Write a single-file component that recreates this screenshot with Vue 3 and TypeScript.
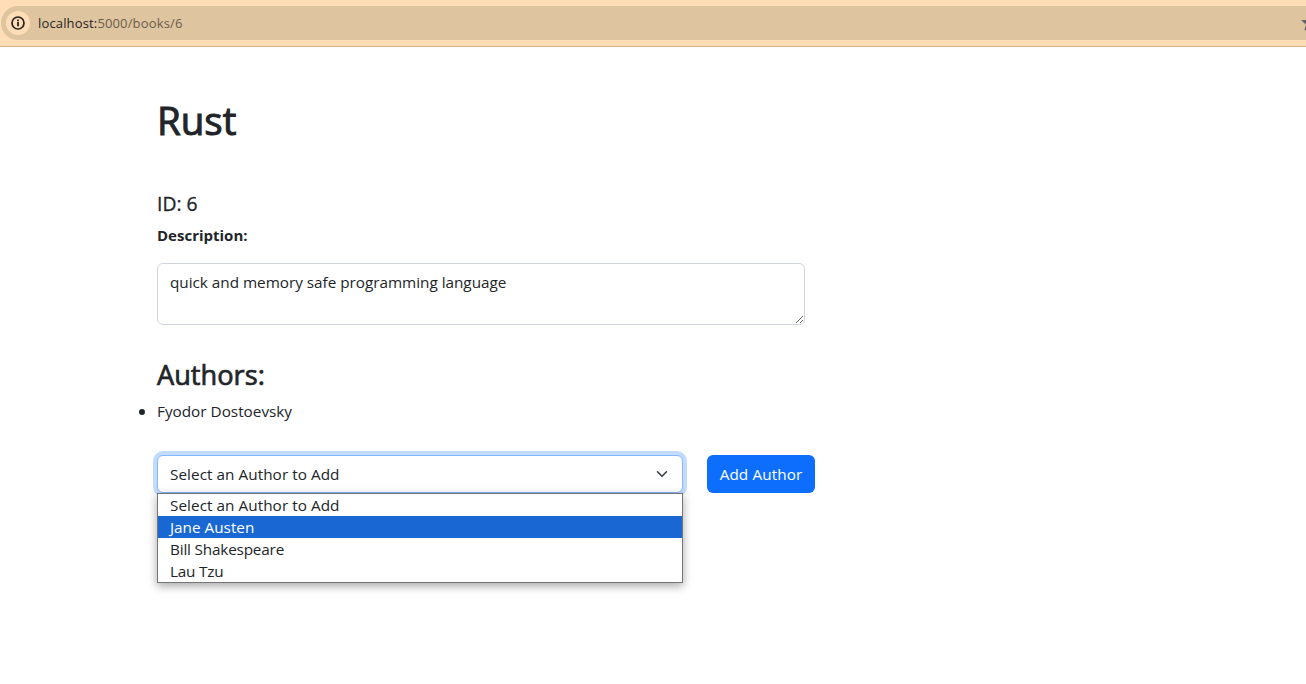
<script setup lang="ts">
import { ref } from 'vue'

const description = ref<string>('quick and memory safe programming language')
const authors: string[] = ['Fyodor Dostoevsky']
const placeholder = 'Select an Author to Add'
const options: { label: string; cls: string }[] = [
  { label: placeholder, cls: 'o-select' },
  { label: 'Jane Austen', cls: 'o-jane' },
  { label: 'Bill Shakespeare', cls: 'o-tight' },
  { label: 'Lau Tzu', cls: 'o-tight' },
]
const active = ref<number>(1)
</script>

<template>
  <div class="window">
    <header class="toolbar">
      <div class="address">
        <span class="info">
          <svg width="14" height="14" viewBox="0 0 14 14">
            <circle cx="7" cy="7" r="6" fill="none" stroke="#27231f" stroke-width="1.7" />
            <rect x="6.1" y="6" width="1.8" height="4.3" fill="#27231f" />
            <rect x="6.1" y="3.5" width="1.8" height="1.7" fill="#27231f" />
          </svg>
        </span>
        <span class="url"><span class="host">localhost:</span>5000/books/6</span>
        <svg class="star" width="18" height="18" viewBox="0 0 18 18">
          <path d="M9 0l2.400 5.800 6.600.500-5 4.200 1.600 6.300L9 13.400l-5.600 3.400 1.600-6.300L0 6.300l6.600-.500z" fill="#5f6064" />
        </svg>
      </div>
    </header>

    <main class="page">
      <h1>Rust</h1>
      <h5>ID: 6</h5>
      <label class="desc-label">Description:</label>
      <textarea v-model="description" class="desc" spellcheck="false"></textarea>
      <h3>Authors:</h3>
      <ul>
        <li v-for="a in authors" :key="a">{{ a }}</li>
      </ul>
      <div class="row">
        <div class="picker">
          <div class="select">
            <span class="o-select">{{ placeholder }}</span>
            <svg width="16" height="12" viewBox="0 0 16 16">
              <path d="m2 5 6 6 6-6" fill="none" stroke="#343a40" stroke-width="2" stroke-linecap="round" stroke-linejoin="round" />
            </svg>
          </div>
          <div class="menu">
            <div
              v-for="(o, i) in options"
              :key="o.label"
              class="option"
              :class="{ active: i === active }"
              @mouseenter="active = i"
            >
              <span :class="o.cls">{{ o.label }}</span>
            </div>
          </div>
        </div>
        <button type="button" class="add">Add Author</button>
      </div>
    </main>
  </div>
</template>

<style>
body {
  margin: 0;
  background: #fff;
  overflow: hidden;
}
</style>

<style scoped>
* {
  box-sizing: border-box;
}
.window {
  height: 684px;
  overflow: hidden;
  font-family: 'Open Sans', 'Noto Sans', sans-serif;
  font-size: 15.3px;
  line-height: 24px;
  color: #212529;
}
.toolbar {
  height: 47px;
  padding: 6px 0 0 1px;
  background: #ffdeb7;
  border-bottom: 1px solid #d0b28d;
}
.address {
  display: flex;
  align-items: center;
  width: 1323px;
  height: 34px;
  padding-left: 5px;
  border-radius: 17px 0 0 17px;
  background: #dfc4a0;
}
.info {
  display: flex;
  align-items: center;
  justify-content: center;
  width: 24px;
  height: 24px;
  border-radius: 50%;
  background: #ffdeb7;
}
.url {
  margin-left: 8px;
  font-size: 13px;
  letter-spacing: 0.15px;
  color: #6a5d4c;
}
.host {
  color: #27231f;
}
.star {
  margin-left: auto;
  margin-right: 5px;
}
.page {
  width: 658px;
  margin-left: 157px;
  padding-top: 49px;
}
h1,
h3,
h5 {
  margin: 0;
  font-weight: 500;
}
h1 {
  font-size: 38.5px;
  line-height: 48px;
  height: 48px;
  -webkit-text-stroke: 1px #212529;
}
h5 {
  margin-top: 48px;
  font-size: 19.3px;
  line-height: 24px;
  -webkit-text-stroke: 0.3px #212529;
}
.desc-label {
  display: block;
  margin-top: 7px;
  font-size: 15px;
  font-weight: 700;
}
.desc {
  display: block;
  width: 648px;
  height: 62px;
  margin: 16px 0 0;
  padding: 6px 12px;
  border: 1px solid #ced4da;
  border-radius: 6px;
  outline: none;
  resize: vertical;
  font: inherit;
  letter-spacing: -0.02px;
  color: inherit;
  background: #fff;
}
h3 {
  margin-top: 33px;
  font-size: 27.2px;
  line-height: 34px;
  -webkit-text-stroke: 0.7px #212529;
}
ul {
  margin: 7px 0 0;
  padding: 0;
  list-style: none;
}
li {
  position: relative;
}
li::before {
  content: '';
  position: absolute;
  left: -18px;
  top: 10px;
  width: 6px;
  height: 6px;
  border-radius: 50%;
  background: #212529;
}
.row {
  display: flex;
  gap: 24px;
  margin-top: 32px;
}
.picker {
  position: relative;
  width: 526px;
}
.select {
  display: flex;
  align-items: center;
  justify-content: space-between;
  height: 38px;
  padding: 0 12px;
  border: 1px solid #86b7fe;
  border-radius: 6px;
  box-shadow: 0 0 0 4px #c2dbfe;
  background: #fff;
}
.menu {
  position: absolute;
  top: 38px;
  left: 0;
  width: 526px;
  border: 1px solid #767676;
  background: #fff;
  box-shadow: 0 3px 9px rgba(0, 0, 0, 0.35);
}
.option {
  height: 22px;
  padding-left: 12px;
  line-height: 22px;
}
.o-select {
  letter-spacing: 0.05px;
}
.o-tight {
  letter-spacing: -0.18px;
}
.option.active {
  color: #fff;
  background: #1967d2;
}
.add {
  width: 108px;
  height: 38px;
  padding: 0;
  border: 0;
  border-radius: 6px;
  background: #0d6efd;
  color: #fff;
  font: inherit;
  letter-spacing: 0.1px;
  white-space: nowrap;
}
</style>
